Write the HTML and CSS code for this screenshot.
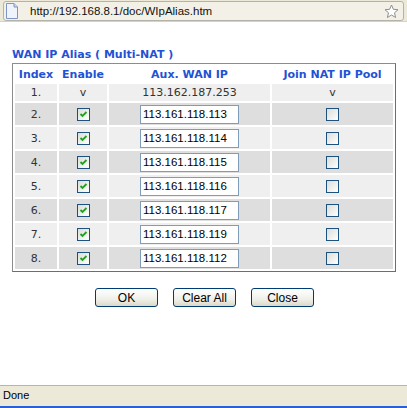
FILE: index.html
```html
<!DOCTYPE html>
<html lang="en">
<head>
    <meta charset="UTF-8">
    <title>WAN IP Alias</title>
    <link rel="stylesheet" href="styles.css">
</head>
<body>
    <!-- Address Bar -->
    <div class="address-bar">
        <div class="address-field">
            <svg class="page-icon" width="12" height="16" viewBox="0 0 12 16">
                <path d="M0.5 0.5 H8 L11.5 4 V15.5 H0.5 Z" fill="#eef3fc" stroke="#7f96c4"/>
                <path d="M8 0.5 V4 H11.5" fill="#c9d6ef" stroke="#7f96c4"/>
            </svg>
            <span class="url">http://192.168.8.1/doc/WIpAlias.htm</span>
            <svg class="star" width="15" height="15" viewBox="0 0 15 15">
                <path d="M7.5 1 L9.4 5.3 L14 5.7 L10.5 8.8 L11.6 13.5 L7.5 11 L3.4 13.5 L4.5 8.8 L1 5.7 L5.6 5.3 Z" fill="#fff" stroke="#8e8e8e" stroke-linejoin="round"/>
            </svg>
        </div>
    </div>

    <!-- Page Content -->
    <div class="content">
        <div class="title">WAN IP Alias ( Multi-NAT )</div>
        <table class="alias-table">
            <tr class="head">
                <th class="col-index">Index</th>
                <th class="col-enable">Enable</th>
                <th class="col-ip">Aux. WAN IP</th>
                <th class="col-pool">Join NAT IP Pool</th>
            </tr>
            <tr class="row-1">
                <td>1.</td>
                <td>v</td>
                <td>113.162.187.253</td>
                <td>v</td>
            </tr>
        </table>
        <div class="buttons">
            <button type="button">OK</button>
            <button type="button">Clear All</button>
            <button type="button">Close</button>
        </div>
    </div>

    <!-- Status Bar -->
    <div class="status-bar">Done</div>

    <script src="rows.js"></script>
</body>
</html>
```

FILE: rows.js
```js
// Aux. WAN IP rows 2 - 8
const rows = [
    '113.161.118.113',
    '113.161.118.114',
    '113.161.118.115',
    '113.161.118.116',
    '113.161.118.117',
    '113.161.118.119',
    '113.161.118.112'
];

const table = document.querySelector('.alias-table');

const checkedBox = '<span class="check"><svg width="13" height="13" viewBox="0 0 13 13">' +
    '<path d="M3.5 6 L5.5 8 L9.5 4" fill="none" stroke="#21a121" stroke-width="1.8"/></svg></span>';
const emptyBox = '<span class="check"></span>';

rows.forEach((ip, i) => {
    const tr = document.createElement('tr');
    tr.className = i % 2 === 0 ? 'row-even' : 'row-odd';
    tr.innerHTML =
        '<td>' + (i + 2) + '.</td>' +
        '<td>' + checkedBox + '</td>' +
        '<td><input type="text" class="ip-input" value="' + ip + '"></td>' +
        '<td>' + emptyBox + '</td>';
    table.appendChild(tr);
});
```

FILE: styles.css
```css
/* General Styles */
body {
    margin: 0;
    height: 408px;
    display: flex;
    flex-direction: column;
    background: #fff;
    font-family: "DejaVu Sans", Verdana, sans-serif;
    overflow: hidden;
}

/* Address Bar */
.address-bar {
    height: 22px;
    background: #ece9d8;
    border-bottom: 1px solid #d6d3c4;
    padding: 1px 3px 0 3px;
    box-sizing: border-box;
}

.address-field {
    height: 18px;
    display: flex;
    align-items: center;
    border: 1px solid #b5b3a8;
    border-radius: 3px;
    background: #f3f1e7;
    padding: 0 4px 0 2px;
}

.page-icon {
    margin-right: 12px;
}

.url {
    flex: 1;
    font-family: "Liberation Sans", Arial, sans-serif;
    font-size: 11.5px;
    color: #111;
}

/* Content */
.content {
    padding: 24px 11px 0 12px;
}

.title {
    color: #1f52d4;
    font-size: 11px;
    font-weight: bold;
    height: 17px;
    line-height: 17px;
}

.alias-table {
    width: 384px;
    border: 1px solid #8c8c8c;
    border-right-color: #6e6e6e;
    border-bottom-color: #6e6e6e;
    border-spacing: 2px;
    font-size: 11px;
    color: #333;
}

.alias-table th,
.alias-table td {
    padding: 0;
    text-align: center;
}

.alias-table th {
    height: 16px;
    color: #1f52d4;
    font-weight: bold;
}

.col-index { width: 42px; }
.col-enable { width: 48px; }
.col-ip { width: 161px; }
.col-pool { width: 121px; }

.row-1 td {
    height: 17px;
    background: #efefef;
}

.row-even td {
    height: 22px;
    background: #dedede;
}

.row-odd td {
    height: 22px;
    background: #efefef;
}

/* Inputs */
.ip-input {
    display: block;
    margin: 0 auto;
    width: 99px;
    height: 19px;
    box-sizing: border-box;
    border: 1px solid #7f9db9;
    padding: 0 2px;
    font-family: "Liberation Sans", Tahoma, sans-serif;
    font-size: 11.5px;
    color: #000;
    background: #fff;
}

.check {
    display: inline-block;
    vertical-align: middle;
    width: 13px;
    height: 13px;
    box-sizing: border-box;
    border: 1px solid #1c5180;
    background: linear-gradient(135deg, #dcdcd7, #ffffff);
    line-height: 0;
}

.check svg {
    margin: -1px 0 0 -1px;
}

/* Buttons */
.buttons {
    display: flex;
    justify-content: center;
    gap: 15px;
    margin-top: 16px;
    padding-left: 1px;
}

.buttons button {
    width: 63px;
    height: 19px;
    padding: 0;
    border: 1px solid #003c74;
    border-radius: 3px;
    background: linear-gradient(#ffffff, #f0f0ea 60%, #dcd8c8);
    font-family: "Liberation Sans", Tahoma, sans-serif;
    font-size: 12px;
    color: #000;
}

/* Status Bar */
.status-bar {
    margin-top: auto;
    height: 20px;
    line-height: 19px;
    background: #ece9d8;
    border-top: 1px solid #b9b6a8;
    border-bottom: 2px solid #2b5fd9;
    padding-left: 3px;
    font-family: "Liberation Sans", Tahoma, sans-serif;
    font-size: 11px;
    color: #000;
}
```
